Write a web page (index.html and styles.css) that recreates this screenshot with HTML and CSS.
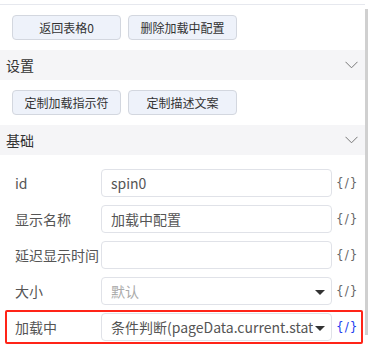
FILE: index.html
```html
<!DOCTYPE html>
<html lang="zh-CN">

<head>
    <meta charset="UTF-8">
    <meta name="viewport" content="width=device-width, initial-scale=1.0">
    <title>加载中配置</title>
    <link rel="stylesheet" href="styles.css">
</head>

<body>
    <div id="panel">
        <div class="btn_row">
            <button class="btn">返回表格0</button>
            <button class="btn">删除加载中配置</button>
        </div>

        <div class="section">
            <span>设置</span>
            <svg class="arrow" width="13" height="8" viewBox="0 0 13 8">
                <path d="M0.5 0.8 L6.5 6.8 L12.5 0.8" fill="none" stroke="#777" stroke-width="1"/>
            </svg>
        </div>
        <div class="btn_row">
            <button class="btn">定制加载指示符</button>
            <button class="btn">定制描述文案</button>
        </div>

        <div class="section">
            <span>基础</span>
            <svg class="arrow" width="13" height="8" viewBox="0 0 13 8">
                <path d="M0.5 0.8 L6.5 6.8 L12.5 0.8" fill="none" stroke="#777" stroke-width="1"/>
            </svg>
        </div>

        <div id="form">
            <div class="row">
                <label>id</label>
                <div class="field">spin0</div>
                <span class="code">{/}</span>
            </div>
            <div class="row">
                <label>显示名称</label>
                <div class="field">加载中配置</div>
                <span class="code">{/}</span>
            </div>
            <div class="row">
                <label>延迟显示时间</label>
                <div class="field"></div>
                <span class="code">{/}</span>
            </div>
            <div class="row">
                <label>大小</label>
                <div class="field select placeholder">默认<i class="caret"></i></div>
                <span class="code">{/}</span>
            </div>
            <div class="row marked">
                <label>加载中</label>
                <div class="field select"><span class="val">条件判断(pageData.current.status)</span><i class="caret"></i></div>
                <span class="code active">{/}</span>
            </div>
        </div>
    </div>
    <div id="scrollbar"></div>
</body>

</html>
```

FILE: styles.css
```css
body {
    margin: 0;
    font-family: "Noto Sans CJK SC", "Noto Sans", sans-serif;
    background-color: white;
    color: #333;
}

#panel {
    margin-top: 4px;
    width: 365px;
    border-top: 1px solid #e6e8ee;
}

.btn_row {
    display: flex;
    gap: 7px;
    padding: 10px 12px;
}

.btn {
    width: 109px;
    height: 25px;
    padding: 0;
    font-family: inherit;
    font-size: 12px;
    color: #333;
    background-color: #eef2fa;
    border: 1px solid #d3d7df;
    border-radius: 4px;
}

.section {
    height: 30px;
    display: flex;
    align-items: center;
    justify-content: space-between;
    padding: 0 7px 0 6px;
    background-color: #f5f5f7;
    font-size: 14px;
    color: #333;
}

#form {
    padding: 14px 0 14px 0;
    display: flex;
    flex-direction: column;
    gap: 8px;
}

.row {
    display: flex;
    align-items: center;
    height: 28px;
    padding-left: 15px;
}

.row label {
    width: 86px;
    font-size: 14px;
    color: #555;
    white-space: nowrap;
}

.field {
    width: 231px;
    height: 28px;
    box-sizing: border-box;
    border: 1px solid #e0e2e8;
    border-radius: 4px;
    padding: 0 9px;
    font-size: 14px;
    line-height: 26px;
    color: #555;
    display: flex;
    align-items: center;
    overflow: hidden;
    white-space: nowrap;
}

.select {
    padding-right: 6px;
}

.placeholder {
    color: #aaa;
}

.val {
    flex: 1;
    overflow: hidden;
    white-space: nowrap;
}

.caret {
    margin-left: auto;
    flex: none;
    width: 0;
    height: 0;
    margin-top: 3px;
    border-left: 5px solid transparent;
    border-right: 5px solid transparent;
    border-top: 5px solid #333;
}

.val + .caret {
    margin-left: 2px;
}

.code {
    margin-left: 4px;
    font-family: "DejaVu Sans", sans-serif;
    font-size: 12px;
    letter-spacing: 1px;
    color: #666;
}

.code.active {
    color: #1a3cf0;
}

.marked {
    margin-left: 5px;
    width: 358px;
    padding-left: 8px;
    box-sizing: border-box;
    height: 34px;
    margin-top: -3px;
    margin-bottom: -3px;
    border: 2px solid #ff2418;
    border-radius: 2px;
}

#scrollbar {
    position: absolute;
    top: 9px;
    right: 0;
    width: 3px;
    height: 326px;
    background-color: #d0d0d0;
}
```
